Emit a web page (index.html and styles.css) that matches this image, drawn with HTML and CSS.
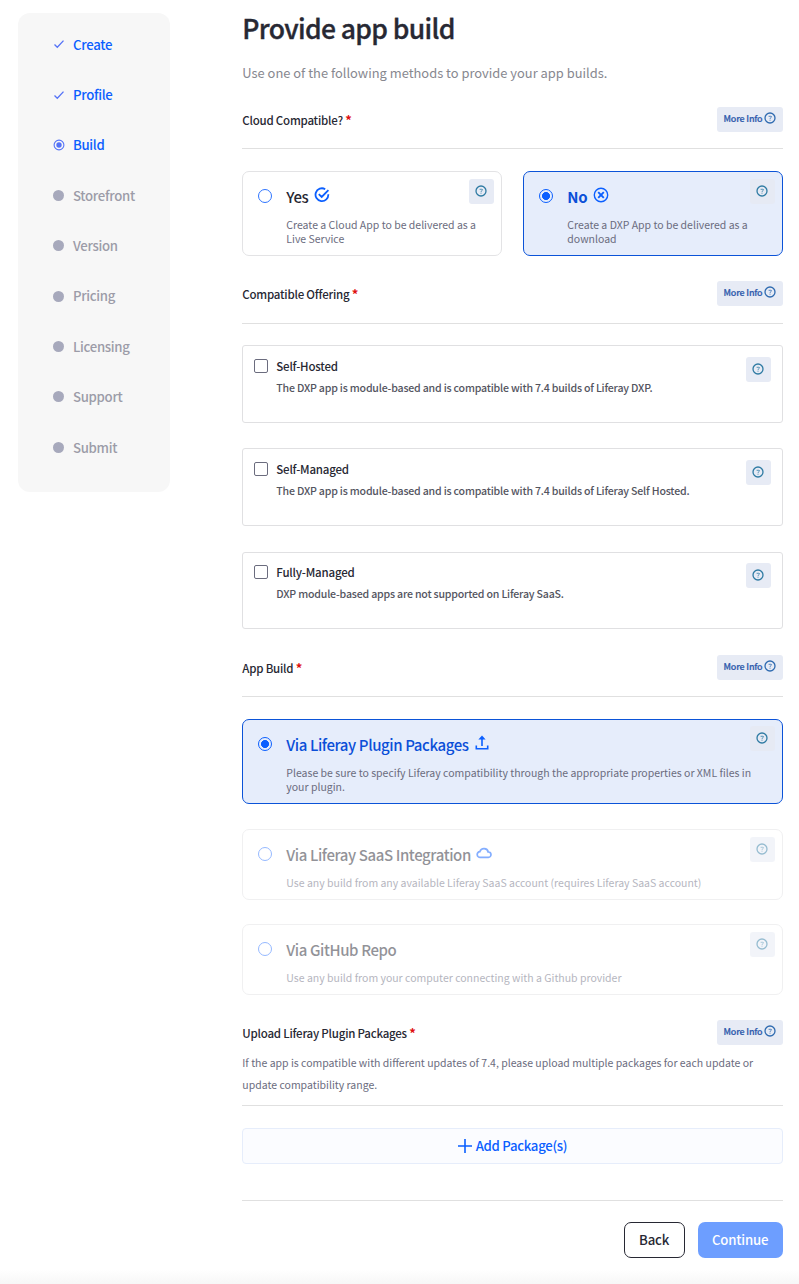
FILE: index.html
```html
<!DOCTYPE html>
<html lang="en">
<head>
<meta charset="utf-8">
<title>Provide app build</title>
<link rel="stylesheet" href="styles.css">
</head>
<body>
<svg class="defs" width="0" height="0">
  <symbol id="help" viewBox="0 0 12 12"><circle cx="6" cy="6" r="5" fill="none" stroke="currentColor" stroke-width="1.3"/><path d="M4.6 4.3h2.2q.9 0 .6.9L6 6.5v.6M6 7.8v.9" fill="none" stroke="currentColor" stroke-width=".8"/></symbol>
  <symbol id="check" viewBox="0 0 12 12"><path d="M1.5 6.5 4.3 9.3 10.5 2.6" fill="none" stroke="currentColor" stroke-width="1.3"/></symbol>
</svg>
<div class="page">
  <nav class="steps">
    <div class="step done"><svg class="mark"><use href="#check"/></svg><span>Create</span></div>
    <div class="step done"><svg class="mark"><use href="#check"/></svg><span>Profile</span></div>
    <div class="step done"><svg class="mark" viewBox="0 0 12 12"><circle cx="6" cy="6" r="4.9" fill="none" stroke="currentColor" stroke-width="1.1"/><circle cx="6" cy="6" r="2.7" fill="currentColor"/></svg><span>Build</span></div>
    <div class="step"><i class="dot"></i><span>Storefront</span></div>
    <div class="step"><i class="dot"></i><span>Version</span></div>
    <div class="step"><i class="dot"></i><span>Pricing</span></div>
    <div class="step"><i class="dot"></i><span>Licensing</span></div>
    <div class="step"><i class="dot"></i><span>Support</span></div>
    <div class="step"><i class="dot"></i><span>Submit</span></div>
  </nav>
  <main class="main">
    <h1 class="title">Provide app build</h1>
    <p class="subtitle">Use one of the following methods to provide your app builds.</p>

    <div class="section first"><h2 class="label">Cloud Compatible? <b class="req">*</b></h2><button class="info">More Info<svg><use href="#help"/></svg></button></div>
    <div class="pair">
      <div class="card">
        <i class="radio"></i>
        <div class="body"><h3 class="name">Yes <svg class="glyph" viewBox="0 0 16 16"><path d="M11.2 2.2A6.4 6.4 0 1 0 14.3 7.2M4.8 7.2 7.7 10 14.4 3.2" fill="none" stroke="currentColor" stroke-width="1.8"/></svg></h3><p class="desc">Create a Cloud App to be delivered as a<br>Live Service</p></div>
        <span class="help"><svg><use href="#help"/></svg></span>
      </div>
      <div class="card on">
        <i class="radio"></i>
        <div class="body"><h3 class="name bold">No <svg class="glyph" viewBox="0 0 16 16"><circle cx="8" cy="8" r="6.7" fill="none" stroke="currentColor" stroke-width="1.4"/><path d="m5.2 5.2 5.6 5.6m0-5.6-5.6 5.6" stroke="currentColor" stroke-width="1.9"/></svg></h3><p class="desc">Create a DXP App to be delivered as a<br>download</p></div>
        <span class="help"><svg><use href="#help"/></svg></span>
      </div>
    </div>

    <div class="section offers"><h2 class="label">Compatible Offering <b class="req">*</b></h2><button class="info">More Info<svg><use href="#help"/></svg></button></div>
    <div class="offer"><i class="box"></i><div class="body"><h3 class="offer-name">Self-Hosted</h3><p class="offer-desc">The DXP app is module-based and is compatible with 7.4 builds of Liferay DXP.</p></div><span class="help"><svg><use href="#help"/></svg></span></div>
    <div class="offer"><i class="box"></i><div class="body"><h3 class="offer-name">Self-Managed</h3><p class="offer-desc">The DXP app is module-based and is compatible with 7.4 builds of Liferay Self Hosted.</p></div><span class="help"><svg><use href="#help"/></svg></span></div>
    <div class="offer last"><i class="box"></i><div class="body"><h3 class="offer-name">Fully-Managed</h3><p class="offer-desc">DXP module-based apps are not supported on Liferay SaaS.</p></div><span class="help"><svg><use href="#help"/></svg></span></div>

    <div class="section build"><h2 class="label">App Build <b class="req">*</b></h2><button class="info">More Info<svg><use href="#help"/></svg></button></div>
    <div class="card on wide">
      <i class="radio"></i>
      <div class="body"><h3 class="name">Via Liferay Plugin Packages <svg class="glyph" viewBox="0 0 16 16"><path d="M2.3 10.6v3.2h11.4v-3.2M8 11V2.5" fill="none" stroke="currentColor" stroke-width="1.6"/><path d="M8 .5 11.6 4.6H4.4z" fill="currentColor"/></svg></h3><p class="desc">Please be sure to specify Liferay compatibility through the appropriate properties or XML files in<br>your plugin.</p></div>
      <span class="help"><svg><use href="#help"/></svg></span>
    </div>
    <div class="card off">
      <i class="radio"></i>
      <div class="body"><h3 class="name">Via Liferay SaaS Integration <svg class="glyph" viewBox="0 0 16 16"><path d="M4.3 12.4a2.9 2.9 0 0 1-.4-5.8A4.3 4.3 0 0 1 12.2 7a2.7 2.7 0 0 1 .2 5.4z" fill="none" stroke="currentColor" stroke-width="1.7"/></svg></h3><p class="desc">Use any build from any available Liferay SaaS account (requires Liferay SaaS account)</p></div>
      <span class="help"><svg><use href="#help"/></svg></span>
    </div>
    <div class="card off">
      <i class="radio"></i>
      <div class="body"><h3 class="name">Via GitHub Repo</h3><p class="desc">Use any build from your computer connecting with a Github provider</p></div>
      <span class="help"><svg><use href="#help"/></svg></span>
    </div>

    <div class="section upload"><h2 class="label">Upload Liferay Plugin Packages <b class="req">*</b></h2><button class="info">More Info<svg><use href="#help"/></svg></button></div>
    <p class="note">If the app is compatible with different updates of 7.4, please upload multiple packages for each update or<br>update compatibility range.</p>
    <button class="add"><svg viewBox="0 0 14 14"><path d="M7 0v14M0 7h14" stroke="currentColor" stroke-width="1.6"/></svg><span>Add Package(s)</span></button>
    <footer class="actions"><button class="btn back">Back</button><button class="btn next">Continue</button></footer>
  </main>
</div>
</body>
</html>
```
FILE: styles.css
```css
* { box-sizing: border-box; }
body { margin: 0; background: #fff; font-family: "Noto Sans CJK SC", "Noto Sans", sans-serif; color: #272833; }
h1, h2, h3, p { margin: 0; font-weight: 500; white-space: nowrap; }
button { font-family: inherit; margin: 0; }
.defs { display: block; }
.page { display: flex; align-items: flex-start; gap: 72.3px; height: 1284px; padding: 13px 16px 0 18px; background: linear-gradient(#fff, #f7f7f7) 0 100% / 100% 15px no-repeat; }

.steps { width: 152px; height: 479px; padding: 6px 0 0 35px; border-radius: 12px; background: #f7f7f7; }
.step { display: flex; align-items: center; gap: 8px; height: 50.4px; font-size: 13.2px; letter-spacing: -.3px; font-weight: 500; color: #9c9ca8; }
.step span { padding-bottom: .4px; }
.step.done { color: #0b5fff; }
.mark { width: 12px; height: 12px; color: #5573f7; }
.dot { width: 11px; height: 11px; margin-right: 1px; border-radius: 50%; background: #a7a9bc; }

.main { width: 540.3px; }
.title { height: 32px; font-size: 26.5px; letter-spacing: -.65px; line-height: 30px; font-weight: 500; -webkit-text-stroke: .35px; }
.subtitle { height: 20px; margin-top: 18px; font-size: 12.9px; line-height: 20px; font-weight: 400; color: #87888f; }

.section { display: flex; justify-content: space-between; align-items: flex-start; height: 43px; margin: 25px 0 22px; border-bottom: 1px solid #e0e0e0; }
.section.first { height: 42px; margin-top: 24px; }
.section.offers { margin-bottom: 21px; }
.section.build { height: 42px; margin-top: 26px; }
.label { margin-top: 3px; font-size: 11.5px; letter-spacing: -.22px; line-height: 20px; }
.req { color: #e01010; font-weight: 700; font-size: 13px; line-height: 1; }
.info { display: flex; align-items: flex-start; gap: 2px; width: 66px; height: 25px; padding: 5px 0 0 7px; border: 0; border-radius: 3px; background: #e7ebf5; color: #2e5aac; font-size: 9px; letter-spacing: -.2px; line-height: 14px; font-weight: 500; -webkit-text-stroke: .2px; white-space: nowrap; }
.info svg { flex: none; width: 12px; height: 12px; color: #2f6bb0; }

.pair { display: flex; gap: 21.8px; }
.card { display: flex; position: relative; width: 100%; height: 85px; padding: 15px 0 0 15px; border: 1px solid #e3e3e5; border-radius: 7px; background: #fff; }
.pair .card { width: 259.25px; }
.card.on { border-color: #0b53d8; background: #e6edfb; }
.card.off { height: 71px; margin-top: 25px; opacity: .5; }
.card.off + .card.off { margin-top: 24px; }
.radio { flex: none; width: 14px; height: 14px; margin: 2px 14px 0 0; border: 1px solid #2e75ff; border-radius: 50%; }
.on .radio { border: 1.5px solid #0b5fff; background: radial-gradient(circle, #0b5fff 0 3.7px, transparent 4.3px); }
.name { display: flex; align-items: center; gap: 5.5px; height: 22px; margin-top: -1px; font-size: 15px; letter-spacing: -.4px; line-height: 22px; }
.name.bold { font-weight: 700; }
.on .name { color: #0b4fd8; }
.glyph { width: 16px; height: 16px; margin-top: -4px; color: #0b5fff; }
.desc { margin-top: 10px; font-size: 10.5px; line-height: 14px; font-weight: 400; color: #6b6c7e; }
.help { display: flex; position: absolute; top: 7px; right: 7px; width: 25px; height: 25px; padding: 6px 0 0 6px; border-radius: 3px; background: #e7ebf5; color: #2f7ba3; }
.help svg { width: 12px; height: 12px; }
.on .help { background: #e6eaf4; }
.wide .help { top: 6px; }

.offer { display: flex; position: relative; height: 78px; margin-bottom: 25px; padding: 12px 0 0 11px; border: 1px solid #e0e0e2; border-radius: 3px; }
.offer.last { height: 77px; margin-top: 26px; padding-top: 11px; }
.offer .help { top: 11px; right: 11px; }
.offer.last .help { top: 10px; }
.box { flex: none; width: 14px; height: 14px; margin: 1px 8px 0 0; border: 1px solid #6b6c7e; border-radius: 2px; }
.offer-name { font-size: 11.5px; letter-spacing: -.2px; line-height: 16px; }
.offer-desc { margin-top: 6px; font-size: 10.6px; letter-spacing: -.2px; line-height: 16px; color: #54555f; }

.section.upload { height: 32px; margin-bottom: 0; border: 0; }
.note { height: 54px; margin-bottom: 22px; border-bottom: 1px solid #e0e0e0; font-size: 10.5px; line-height: 22px; font-weight: 400; color: #6b6c7e; }
.add { display: flex; justify-content: center; align-items: center; gap: 4px; width: 100%; height: 36px; padding: 0; border: 1px solid #e6edfb; border-radius: 4px; background: #fbfcff; color: #0b5fff; font-size: 13.2px; letter-spacing: -.3px; font-weight: 500; }
.add span { padding-bottom: 2px; }
.add svg { width: 14px; height: 14px; }
.actions { display: flex; justify-content: flex-end; gap: 13px; margin-top: 36px; padding-top: 21px; border-top: 1px solid #e0e0e0; }
.btn { height: 36px; padding: 0 0 1px; border-radius: 7px; font-size: 13.2px; letter-spacing: -.2px; font-weight: 500; }
.back { width: 61px; border: 1px solid #272833; background: #fff; color: #272833; }
.next { width: 85px; border: 0; background: #6d9eff; color: #fff; }
```
